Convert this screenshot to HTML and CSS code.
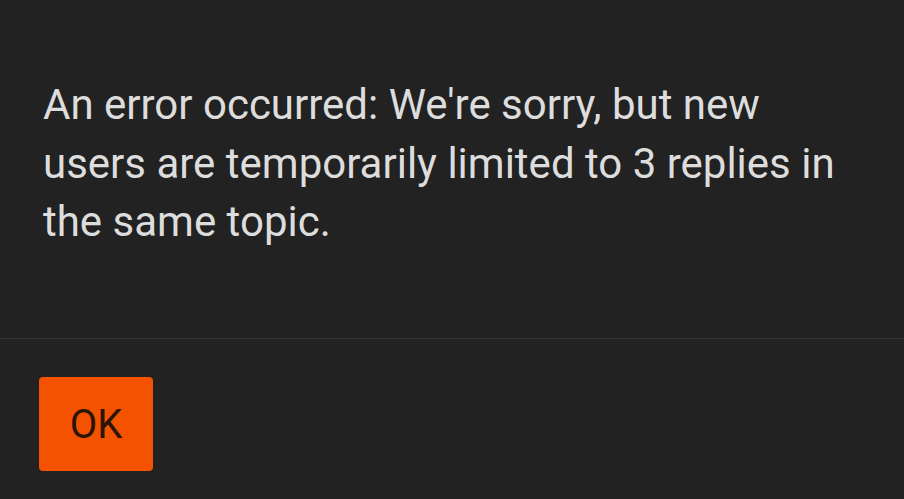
FILE: index.html
```html
<!DOCTYPE html>
<html>
<head>
<meta charset="utf-8">
<link rel="stylesheet" href="styles.css">
</head>
<body>
<div class="dialog">
  <div class="body">
    <p class="message">An error occurred: We're sorry, but new users are temporarily limited to 3 replies in the same topic.</p>
  </div>
  <div class="footer">
    <button class="ok">OK</button>
  </div>
</div>
</body>
</html>
```
FILE: styles.css
```css
html, body {
  margin: 0;
  padding: 0;
  background: #222222;
  height: 100%;
}
.dialog {
  font-family: Roboto, "Noto Sans", sans-serif;
  display: flex;
  flex-direction: column;
  height: 499px;
}
.body {
  padding: 76px 40px 0 43px;
  height: 262px;
  border-bottom: 1px solid #353535;
}
.message {
  margin: 0;
  color: #dddddd;
  font-size: 42px;
  line-height: 58.5px;
}
.footer {
  padding: 38px 0 0 39px;
}
.ok {
  width: 114px;
  height: 94px;
  background: #f55200;
  border: none;
  border-radius: 4px;
  color: #2a1508;
  font-family: Roboto, sans-serif;
  font-size: 40px;
  padding: 0;
}
```
